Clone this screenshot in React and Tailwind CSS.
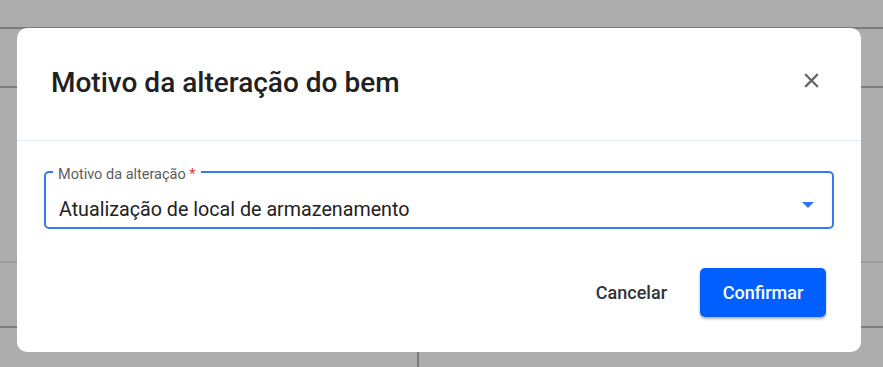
import React from 'react';

const font = { fontFamily: 'Roboto, "Noto Sans", sans-serif' };

const Backdrop = () => (
  <div className="flex h-[367px] w-full flex-col bg-[#adadad]">
    <div className="h-[29px] shrink-0 border-b-2 border-[#7c7c7c]" />
    <div className="h-[59px] shrink-0 border-b-2 border-[#7c7c7c]" />
    <div className="h-[175px] shrink-0 border-b-2 border-[#999d9f]" />
    <div className="h-[65px] shrink-0 border-b-2 border-[#7c7c7c]" />
    <div className="flex flex-1">
      <div className="w-[419px] border-r-2 border-[#7c7c7c]" />
    </div>
  </div>
);

export default function App() {
  return (
    <div className="relative h-[367px] w-full overflow-hidden" style={font}>
      <Backdrop />

      <div className="absolute left-[17px] top-[28px] flex h-[324px] w-[844px] flex-col rounded-[10px] bg-white">
        <div className="flex h-[113px] shrink-0 items-center justify-between border-b border-[#e3e9f3] pl-[34px] pr-[42px]">
          <h2 className="mb-[3px] text-[28px] font-medium leading-none text-[#212121]">Motivo da alteração do bem</h2>
          <button className="mb-[7px] flex h-[16px] w-[16px] items-center justify-center text-[#666666]">
            <svg width="15" height="15" viewBox="0 0 15 15" fill="none" stroke="currentColor" strokeWidth="2.3" strokeLinecap="square">
              <path d="M2 2l11 11M13 2L2 13" />
            </svg>
          </button>
        </div>

        <div className="px-[27px] pt-[30px]">
          <div className="relative flex h-[58px] items-start justify-between rounded-[5px] border-2 border-[#3378f6] pl-[13px] pr-[18px] pt-[25px]">
            <span className="absolute left-[7px] top-[-6px] bg-white px-[5px] text-[14.5px] leading-[16px] text-[#5c5c5c]">
              Motivo da alteração <span className="text-[#e53935]">*</span>
            </span>
            <span className="text-[19.7px] leading-[24px] text-[#222222]">Atualização de local de armazenamento</span>
            <svg width="12" height="6" viewBox="0 0 12 6" className="mt-[4px]">
              <path d="M0 0h12L6 6z" fill="#2f76f2" />
            </svg>
          </div>
        </div>

        <div className="flex flex-1 items-end justify-end gap-[33px] px-[35px] pb-[35px]">
          <button className="h-[49px] text-[18px] font-medium text-[#333333]">Cancelar</button>
          <button className="h-[49px] w-[126px] rounded-[5px] bg-[#005ffe] text-[18px] font-medium text-white shadow-[0_2px_3px_rgba(0,0,0,0.3)]">
            Confirmar
          </button>
        </div>
      </div>
    </div>
  );
}
